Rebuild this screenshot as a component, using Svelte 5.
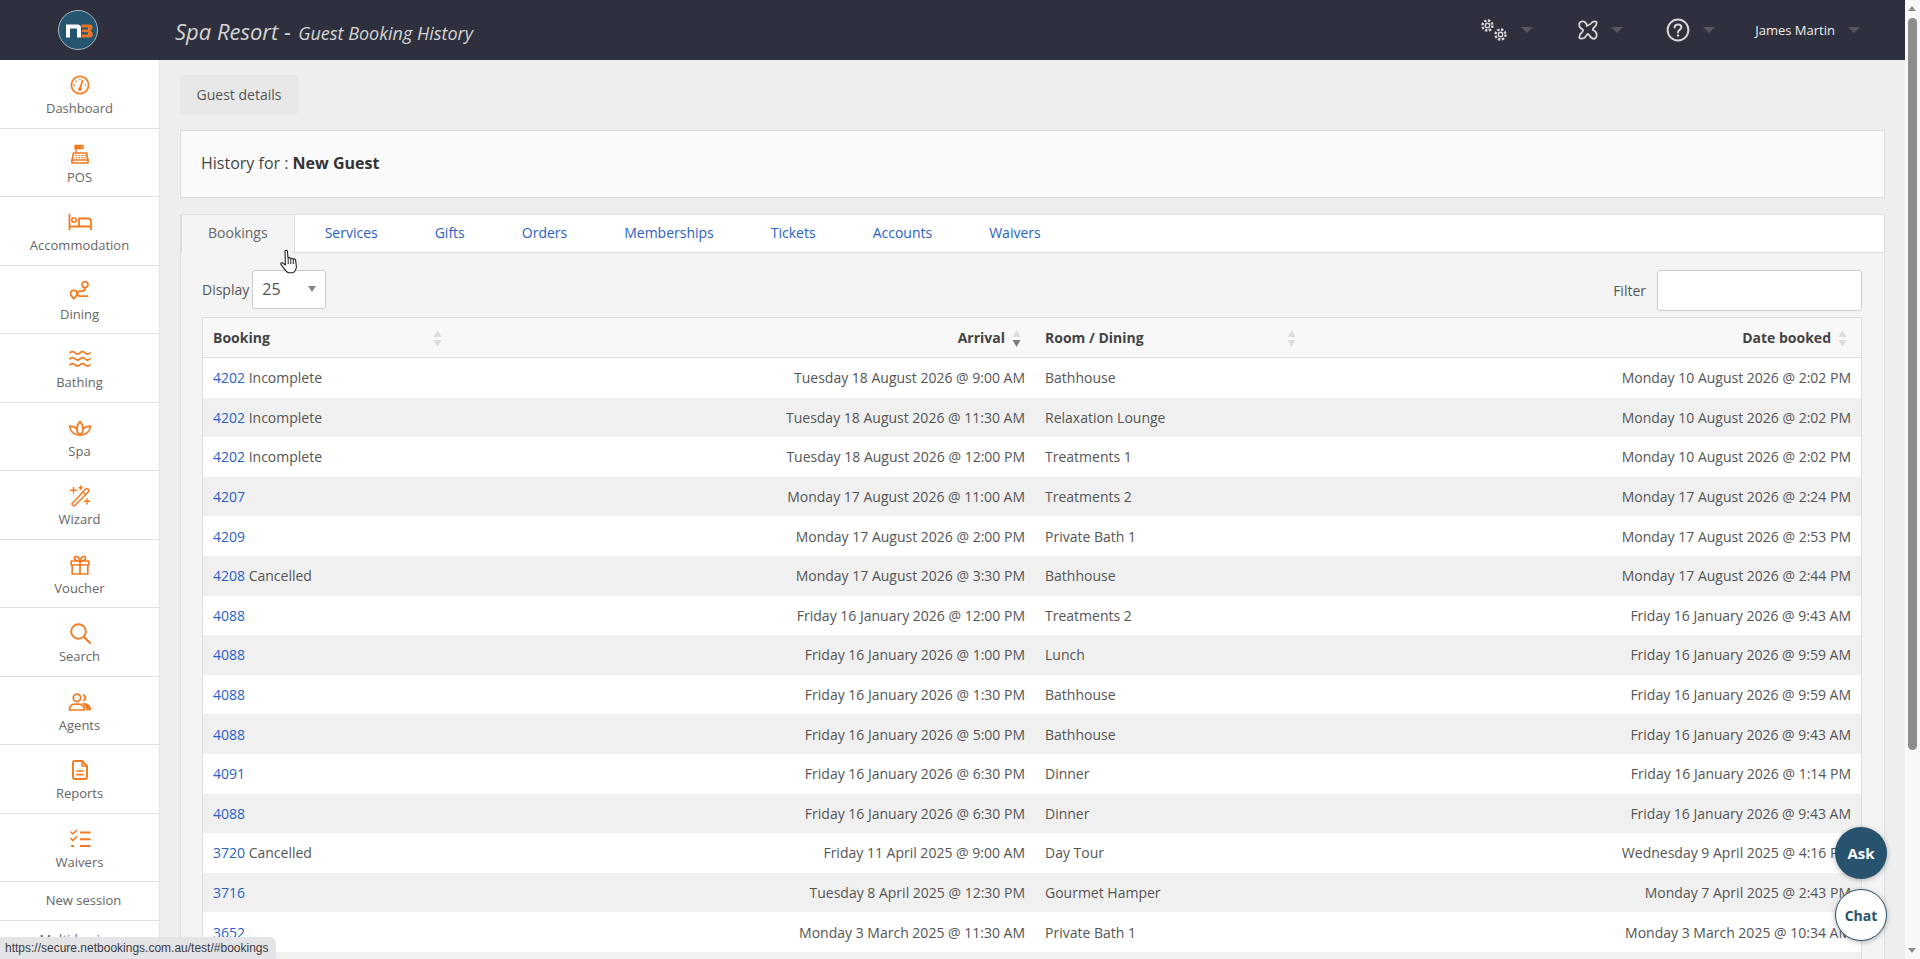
<script lang="ts">
  const navItems = [
    { label: "Dashboard", icon: "gauge" },
    { label: "POS", icon: "till" },
    { label: "Accommodation", icon: "bed" },
    { label: "Dining", icon: "route" },
    { label: "Bathing", icon: "water" },
    { label: "Spa", icon: "lotus" },
    { label: "Wizard", icon: "wand" },
    { label: "Voucher", icon: "gift" },
    { label: "Search", icon: "search" },
    { label: "Agents", icon: "agents" },
    { label: "Reports", icon: "report" },
    { label: "Waivers", icon: "list" },
  ];

  const tabs = ["Services", "Gifts", "Orders", "Memberships", "Tickets", "Accounts", "Waivers"];

  const rows = [
    ["4202", "Incomplete", "Tuesday 18 August 2026 @ 9:00 AM", "Bathhouse", "Monday 10 August 2026 @ 2:02 PM"],
    ["4202", "Incomplete", "Tuesday 18 August 2026 @ 11:30 AM", "Relaxation Lounge", "Monday 10 August 2026 @ 2:02 PM"],
    ["4202", "Incomplete", "Tuesday 18 August 2026 @ 12:00 PM", "Treatments 1", "Monday 10 August 2026 @ 2:02 PM"],
    ["4207", "", "Monday 17 August 2026 @ 11:00 AM", "Treatments 2", "Monday 17 August 2026 @ 2:24 PM"],
    ["4209", "", "Monday 17 August 2026 @ 2:00 PM", "Private Bath 1", "Monday 17 August 2026 @ 2:53 PM"],
    ["4208", "Cancelled", "Monday 17 August 2026 @ 3:30 PM", "Bathhouse", "Monday 17 August 2026 @ 2:44 PM"],
    ["4088", "", "Friday 16 January 2026 @ 12:00 PM", "Treatments 2", "Friday 16 January 2026 @ 9:43 AM"],
    ["4088", "", "Friday 16 January 2026 @ 1:00 PM", "Lunch", "Friday 16 January 2026 @ 9:59 AM"],
    ["4088", "", "Friday 16 January 2026 @ 1:30 PM", "Bathhouse", "Friday 16 January 2026 @ 9:59 AM"],
    ["4088", "", "Friday 16 January 2026 @ 5:00 PM", "Bathhouse", "Friday 16 January 2026 @ 9:43 AM"],
    ["4091", "", "Friday 16 January 2026 @ 6:30 PM", "Dinner", "Friday 16 January 2026 @ 1:14 PM"],
    ["4088", "", "Friday 16 January 2026 @ 6:30 PM", "Dinner", "Friday 16 January 2026 @ 9:43 AM"],
    ["3720", "Cancelled", "Friday 11 April 2025 @ 9:00 AM", "Day Tour", "Wednesday 9 April 2025 @ 4:16 PM"],
    ["3716", "", "Tuesday 8 April 2025 @ 12:30 PM", "Gourmet Hamper", "Monday 7 April 2025 @ 2:43 PM"],
    ["3652", "", "Monday 3 March 2025 @ 11:30 AM", "Private Bath 1", "Monday 3 March 2025 @ 10:34 AM"],
  ];
</script>

{#snippet sortArrows(active = false)}
  <svg class="sort" viewBox="0 0 9 17" width="9" height="17">
    <path d="M4.5 0 L8.5 7 H0.5 Z" fill="#dcdcdc" />
    <path d="M4.5 17 L8.5 10 H0.5 Z" fill={active ? "#7d7d7d" : "#dcdcdc"} />
  </svg>
{/snippet}

{#snippet caret()}
  <span class="caret"></span>
{/snippet}

{#snippet navIcon(name: string)}
  <svg class="nav-icon" viewBox="0 0 24 24" width="24" height="24" fill="none" stroke="#f47a20" stroke-width="1.7" stroke-linecap="round" stroke-linejoin="round">
    {#if name === "gauge"}
      <circle cx="12" cy="12" r="8.6" />
      <path d="M12 16 L14.6 7.6" />
      <circle cx="12" cy="16" r="1.1" fill="#f47a20" />
      <path d="M12 6.6v.2M8 8.3v.2M6.4 12v.2M17.6 12v.2" stroke-width="1.6" />
    {:else if name === "till"}
      <path d="M4 18.5 L5.5 11 H18.5 L20 18.5 V21 H4 Z" />
      <path d="M4 18 H20" />
      <path d="M8 11 V7 M7 3.5 H15 V6.5 H7 Z M8 5 H13" stroke-width="1.4" />
      <path d="M8 13.4h.3M11 13.4h.3M14 13.4h.3M17 13.4h.3M8 15.8h.3M11 15.8h.3M14 15.8h.3M17 15.8h.3" stroke-width="1.4" />
    {:else if name === "bed"}
      <path d="M1.5 4 V20 M1.5 16.5 H23 V20 M23 16.5 V11 Q23 8.5 20 8.5 H11 V16" stroke-linecap="butt" stroke-width="1.8" />
      <circle cx="6" cy="10" r="2.2" stroke-width="1.6" />
    {:else if name === "route"}
      <circle cx="17" cy="5.6" r="3" />
      <path d="M17 8.6 V9.5 Q17 12.2 14 12.2 H12 Q9.4 12.2 9.4 14.6 Q9.4 17.2 12 17.2 H19.5" stroke-width="1.8" />
      <path d="M5.8 19.8 Q2.6 16.6 2.6 14.6 A3.2 3.2 0 0 1 9 14.6 Q9 16.6 5.8 19.8 Z" />
    {:else if name === "water"}
      <path d="M2 5.8 q2.5 -2.4 5 0 t5 0 t5 0 t5 0" />
      <path d="M2 11.8 q2.5 -2.4 5 0 t5 0 t5 0 t5 0" />
      <path d="M2 17.8 q2.5 -2.4 5 0 t5 0 t5 0 t5 0" />
    {:else if name === "lotus"}
      <path d="M12 18.8 C8 16.5 7.8 10 12 5.4 C16.2 10 16 16.5 12 18.8 Z" />
      <path d="M12 18.8 C6 19.4 2 15.4 1.6 10.2 C4 10.2 6.4 11 8.2 12.2" />
      <path d="M12 18.8 C18 19.4 22 15.4 22.4 10.2 C20 10.2 17.6 11 15.8 12.2" />
    {:else if name === "wand"}
      <path d="M4.6 19.2 L17.4 5.2 Q18.8 3.8 20.2 5.2 Q21.6 6.6 20.2 8 L7.4 21 Q6 22.4 4.6 21 Q3.2 19.8 4.6 19.2 Z" stroke-width="1.5" />
      <path d="M14.8 8 L17.6 10.6" stroke-width="1.4" />
      <path d="M5.5 3.5 V9 M2.6 6.2 H8.4 M12.6 2 V5.4 M11 3.7 H14.2 M19 14.6 V20 M16.2 17.3 H21.8" stroke-width="1.4" />
    {:else if name === "gift"}
      <path d="M4.2 12 H19.8 V21 H4.2 Z M3.2 8 H20.8 V12 H3.2 Z M12 8 V21" />
      <path d="M12 8 C9 8 6.4 7.4 6.4 5 C6.4 2.6 10.6 2.4 12 8 C13.4 2.4 17.6 2.6 17.6 5 C17.6 7.4 15 8 12 8 Z" />
    {:else if name === "search"}
      <circle cx="10.5" cy="10.5" r="7.3" stroke-width="1.9" />
      <path d="M16 16 L22 22" stroke-width="1.9" />
    {:else if name === "agents"}
      <circle cx="9" cy="7.8" r="3.7" stroke-width="1.8" />
      <path d="M1.4 20 Q1.4 14.2 7 14.2 H10.5 Q16 14.2 16.4 20 Z" stroke-width="1.7" />
      <path d="M15.5 4.2 A3.8 3.8 0 0 1 15.5 11.4 Q17 7.8 15.5 4.2 Z M14.5 13.4 H17.5 Q22.4 14 23 20 H18.6 Q18.2 16 14.5 13.4 Z" fill="#f47a20" stroke-width="0.6" />
    {:else if name === "report"}
      <path d="M6.4 3 H14 L19 8 V19 Q19 21 17 21 H7 Q5 21 5 19 V5 Q5 3 6.4 3 Z" stroke-width="1.9" />
      <path d="M14 3 V8 H19" stroke-width="1.5" />
      <path d="M9 13 H15 M9 16.6 H15" />
    {:else if name === "list"}
      <path d="M12 5.4 H22.5 M12 12.2 H22.5 M12 19 H22.5" stroke-width="2" stroke-linecap="butt" />
      <path d="M3 5 L5 7 L8.6 3.2 M3 11.6 L5 13.6 L8.6 9.8" stroke-width="1.5" />
      <path d="M3.8 19h1.6" stroke-width="2" />
    {/if}
  </svg>
{/snippet}

<div class="page">
  <div class="window">
    <header class="topbar">
      <div class="logo-cell">
        <svg class="logo" viewBox="0 0 40 40" width="40" height="40">
          <circle cx="20" cy="20" r="19.5" fill="#265570" stroke="#a9b6bf" stroke-width="1" />
          <path d="M8 14.5 H19.5 Q23 14.5 23 18 V27.5 H19 V18.5 H12 V27.5 H8 Z" fill="#fff" />
          <path d="M23.5 14.5 H31.5 Q34.5 14.5 34.5 17.2 Q34.5 19.8 32.4 20.8 Q34.8 21.6 34.8 24.2 Q34.8 27.5 31 27.5 H23.5 V24.6 H30 V22.2 H24 V19.6 H30 V17.4 H23.5 Z" fill="#e8742a" />
        </svg>
      </div>
      <h1 class="title"><span class="title-main">Spa Resort -</span> <span class="title-sub">Guest Booking History</span></h1>
      <div class="top-tools">
        <div class="tool tool-gears">
          <svg viewBox="0 0 28 24" width="28" height="24" fill="none" stroke="#d6d6d6" stroke-width="1.5">
            <circle cx="7.5" cy="7.5" r="5" stroke-dasharray="2.4 1.5" stroke-width="2.4" />
            <circle cx="7.5" cy="7.5" r="2.2" stroke-width="1.4" />
            <circle cx="20.5" cy="16.5" r="5" stroke-dasharray="2.4 1.5" stroke-width="2.4" />
            <circle cx="20.5" cy="16.5" r="2.2" stroke-width="1.4" />
          </svg>
          {@render caret()}
        </div>
        <div class="tool tool-puzzle">
          <svg viewBox="0 0 20 20" width="20" height="20" fill="none" stroke="#d6d6d6" stroke-width="1.8" stroke-linejoin="round">
            <path d="M1.5 3 Q3 0.8 6 1.6 Q9 3 8.8 6 Q12 5 14 2.5 Q16.5 0.5 18.5 2 Q19.2 5 16 7.5 Q14.5 9 14.8 10 Q18 11 18.6 14 Q19 17.5 16.5 18.8 Q13.5 19 11.5 15.5 Q10.5 13.5 9.5 14 Q8 16 6.5 17.8 Q3.5 19.5 1.5 18 Q0.8 15 3.5 12.8 Q5.5 11 5 9.8 Q2.5 8.5 1.5 6.5 Q1 4.5 1.5 3 Z" />
          </svg>
          {@render caret()}
        </div>
        <div class="tool tool-help">
          <svg viewBox="0 0 24 24" width="24" height="24" fill="none" stroke="#d6d6d6" stroke-width="2">
            <circle cx="12" cy="12" r="10.4" />
            <path d="M8.6 9.4 Q8.8 6.4 12 6.4 Q15.4 6.4 15.4 9.2 Q15.4 11 13.4 12 Q12 12.8 12 14.4" stroke-linecap="round" />
            <circle cx="12" cy="17.4" r="1.2" fill="#d6d6d6" stroke="none" />
          </svg>
          {@render caret()}
        </div>
        <div class="tool tool-user">
          <span class="user-name">James Martin</span>
          {@render caret()}
        </div>
      </div>
    </header>

    <div class="body-row">
      <nav class="sidebar">
        {#each navItems as item}
          <a class="nav-item" href="#top">
            {@render navIcon(item.icon)}
            <span>{item.label}</span>
          </a>
        {/each}
        <a class="nav-text" href="#top">New session</a>
        <a class="nav-text" href="#top">Multi-business</a>
      </nav>

      <main class="content">
        <button class="details-btn">Guest details</button>

        <section class="history-panel">History for : <strong>New Guest</strong></section>

        <section class="tab-panel">
          <div class="tab-bar">
            <a class="tab active" href="#bookings">Bookings</a>
            {#each tabs as tab}
              <a class="tab" href="#bookings">{tab}</a>
            {/each}
          </div>

          <div class="tab-body">
            <div class="controls">
              <label class="display">
                Display
                <span class="select"><span>25</span><i class="select-arrow"></i></span>
              </label>
              <label class="filter">
                Filter
                <input type="text" />
              </label>
            </div>

            <table>
              <colgroup>
                <col class="c1" /><col class="c2" /><col class="c3" /><col class="c4" />
              </colgroup>
              <thead>
                <tr>
                  <th>Booking{@render sortArrows()}</th>
                  <th class="right arrival">Arrival{@render sortArrows(true)}</th>
                  <th>Room / Dining{@render sortArrows()}</th>
                  <th class="right booked">Date booked{@render sortArrows()}</th>
                </tr>
              </thead>
              <tbody>
                {#each rows as row}
                  <tr>
                    <td><a href="#bookings">{row[0]}</a>{row[1] ? " " + row[1] : ""}</td>
                    <td class="right">{row[2]}</td>
                    <td>{row[3]}</td>
                    <td class="right">{row[4]}</td>
                  </tr>
                {/each}
                <tr><td colspan="4">&nbsp;</td></tr>
              </tbody>
            </table>
          </div>
        </section>
      </main>
    </div>
  </div>

  <div class="scrollbar">
    <i class="scroll-up"></i>
    <div class="scroll-thumb"></div>
    <i class="scroll-down"></i>
  </div>

  <div class="status-url">https://secure.netbookings.com.au/test/#bookings</div>
  <button class="fab ask">Ask</button>
  <button class="fab chat">Chat</button>

  <svg class="hand" viewBox="0 0 20 25" width="20" height="25">
    <path d="M5 1.6 Q6.6 0.6 7.4 2 L8 9 Q9.6 8.2 10.6 9.4 Q12.2 8.8 13 10 Q14.8 9.6 15.6 11 L16.4 18 Q15.8 22.4 13 23.6 L8.4 23.8 Q6 22.6 4 19.4 L0.9 15.4 Q0.6 13.4 2.4 13.8 L5.4 16 Z" fill="#fff" stroke="#222" stroke-width="1.1" stroke-linejoin="round" />
    <path d="M8.2 9.4 V15 M10.8 9.6 V15 M13.3 10.2 V15" stroke="#222" stroke-width="1" fill="none" />
  </svg>
</div>

<style>
  :global(body) {
    margin: 0;
    overflow: hidden;
    font-family: "Open Sans", "Liberation Sans", sans-serif;
    font-size: 14px;
    color: #555;
  }

  .page {
    position: relative;
    display: flex;
    height: 959px;
    overflow: hidden;
  }

  .window {
    flex: 1;
    min-width: 0;
    display: flex;
    flex-direction: column;
    background: #eee;
  }

  /* top bar */
  .topbar {
    flex: none;
    height: 60px;
    display: flex;
    align-items: center;
    background: #2e303d;
  }

  .logo-cell {
    width: 175px;
    flex: none;
    padding-left: 58px;
    box-sizing: border-box;
    display: flex;
  }

  .title {
    margin: 0 0 2px;
    font-weight: 400;
    font-style: italic;
    color: #d4d4d4;
    white-space: nowrap;
  }

  .title-main {
    font-size: 22px;
  }

  .title-sub {
    font-size: 18px;
  }

  .top-tools {
    margin-left: auto;
    display: flex;
    align-items: center;
    padding-right: 45px;
  }

  .tool {
    display: flex;
    align-items: center;
  }

  .tool svg {
    display: block;
  }

  .tool-gears {
    margin-right: 45px;
  }

  .tool-puzzle {
    margin-right: 43px;
  }

  .tool-help {
    margin-right: 40px;
  }

  .caret {
    display: block;
    width: 0;
    height: 0;
    margin-left: 13px;
    border-left: 6px solid transparent;
    border-right: 6px solid transparent;
    border-top: 6px solid #55565e;
  }

  .user-name {
    color: #eee;
    font-size: 13px;
  }

  /* sidebar */
  .body-row {
    flex: 1;
    min-height: 0;
    display: flex;
  }

  .sidebar {
    flex: none;
    width: 159px;
    background: #fff;
    border-right: 1px solid #e4e4e4;
    overflow: hidden;
  }

  .nav-item {
    height: 67.5px;
    border-bottom: 1px solid #e4e0e6;
    display: flex;
    flex-direction: column;
    align-items: center;
    text-decoration: none;
    color: #666;
    font-size: 13px;
    line-height: 18px;
    padding-top: 13px;
    box-sizing: border-box;
    height: 68.5px;
    gap: 2px;
  }

  .nav-icon {
    display: block;
    flex: none;
  }

  .nav-text {
    display: block;
    height: 38px;
    line-height: 36px;
    text-align: center;
    padding-left: 8px;
    border-bottom: 1px solid #e4e0e6;
    text-decoration: none;
    color: #666;
    font-size: 13px;
  }

  /* main */
  .content {
    flex: 1;
    min-width: 0;
    padding: 15px 20px 0;
    overflow: hidden;
  }

  .details-btn {
    display: block;
    height: 39px;
    width: 118px;
    padding: 0;
    border: 0;
    border-radius: 3px;
    background: #e7e7e7;
    color: #555;
    font: inherit;
  }

  .history-panel {
    margin-top: 16px;
    height: 68px;
    box-sizing: border-box;
    padding-left: 20px;
    line-height: 64px;
    font-size: 16px;
    background: #fafafa;
    border: 1px solid #ddd;
    color: #444;
  }

  .history-panel strong {
    color: #333;
  }

  .tab-panel {
    margin-top: 16px;
    border-left: 1px solid #ddd;
    border-right: 1px solid #ddd;
  }

  .tab-bar {
    height: 39px;
    box-sizing: border-box;
    display: flex;
    gap: 5px;
    background: #fff;
    border-top: 1px solid #e2e2e2;
    border-bottom: 1px solid #ddd;
  }

  .tab {
    height: 38px;
    line-height: 36px;
    padding: 0 26px;
    color: #2a5fc9;
    text-decoration: none;
  }

  .tab.active {
    color: #666;
    background: #f4f4f4;
    border-right: 1px solid #ddd;
    border-left: 1px solid #ddd;
    margin-right: -1px;
    height: 38px;
  }

  .tab-body {
    background: #f4f4f4;
    padding: 17px 22px 0 21px;
  }

  .controls {
    display: flex;
    justify-content: space-between;
    height: 47px;
  }

  .display {
    display: flex;
    align-items: center;
    height: 38px;
    gap: 3px;
  }

  .select {
    width: 74px;
    height: 39px;
    box-sizing: border-box;
    border: 1px solid #ccc;
    border-radius: 3px;
    background: #fff;
    display: flex;
    align-items: center;
    justify-content: space-between;
    padding: 0 9px;
    font-size: 16px;
    color: #555;
  }

  .select-arrow {
    width: 0;
    height: 0;
    border-left: 4px solid transparent;
    border-right: 4px solid transparent;
    border-top: 6px solid #888;
  }

  .filter {
    display: flex;
    align-items: center;
    gap: 11px;
    height: 41px;
  }

  .filter input {
    width: 205px;
    height: 41px;
    box-sizing: border-box;
    border: 1px solid #ccc;
    border-radius: 3px;
    background: #fff;
  }

  table {
    width: 1660px;
    table-layout: fixed;
    border-collapse: separate;
    border-spacing: 0;
    border-left: 1px solid #ddd;
    border-right: 1px solid #ddd;
    background: #fff;
  }

  .c1 {
    width: 253px;
  }
  .c2 {
    width: 579px;
  }
  .c3 {
    width: 275px;
  }

  th {
    position: relative;
    height: 41px;
    box-sizing: border-box;
    padding: 0 10px;
    text-align: left;
    font-weight: 700;
    color: #444;
    background: #f8f8f8;
    border-top: 1px solid #ddd;
    border-bottom: 1px solid #ddd;
  }

  .sort {
    position: absolute;
    right: 14px;
    top: 12px;
  }

  th.arrival {
    padding-right: 30px;
  }

  th.booked {
    padding-right: 30px;
  }

  td {
    height: 39.6px;
    box-sizing: border-box;
    padding: 0 10px;
    color: #555;
    white-space: nowrap;
  }

  tbody tr:nth-child(even) td {
    background: #f0f0f0;
  }

  td a {
    color: #2a5fc9;
    text-decoration: none;
  }

  .right {
    text-align: right;
  }

  /* browser chrome */
  .scrollbar {
    flex: none;
    width: 15px;
    background: #f8f8f8;
    position: relative;
  }

  .scroll-thumb {
    position: absolute;
    left: 3px;
    right: 3px;
    top: 18px;
    height: 732px;
    border-radius: 5px;
    background: #8c8c8c;
  }

  .scroll-up,
  .scroll-down {
    position: absolute;
    left: 3px;
    width: 0;
    height: 0;
    border-left: 4.5px solid transparent;
    border-right: 4.5px solid transparent;
  }

  .scroll-up {
    top: 6px;
    border-bottom: 5px solid #8c8c8c;
  }

  .scroll-down {
    bottom: 6px;
    border-top: 5px solid #8c8c8c;
  }

  .status-url {
    position: absolute;
    left: 0;
    bottom: 0;
    height: 22px;
    line-height: 22px;
    padding: 0 7px 0 5px;
    border-radius: 0 6px 0 0;
    background: #e3e3e8;
    color: #3c3c3c;
    font-family: "Liberation Sans", sans-serif;
    font-size: 12px;
    white-space: nowrap;
  }

  .fab {
    position: absolute;
    left: 1835px;
    width: 52px;
    height: 52px;
    border-radius: 50%;
    padding: 0;
    font: inherit;
    font-weight: 700;
    box-shadow: 0 1px 5px rgba(0, 0, 0, 0.3);
  }

  .ask {
    top: 827px;
    border: 0;
    background: #28536e;
    color: #fff;
    font-size: 15px;
  }

  .chat {
    top: 889px;
    border: 1px solid #28536e;
    background: #fff;
    color: #28536e;
  }

  .hand {
    position: absolute;
    left: 280px;
    top: 249px;
  }
</style>
